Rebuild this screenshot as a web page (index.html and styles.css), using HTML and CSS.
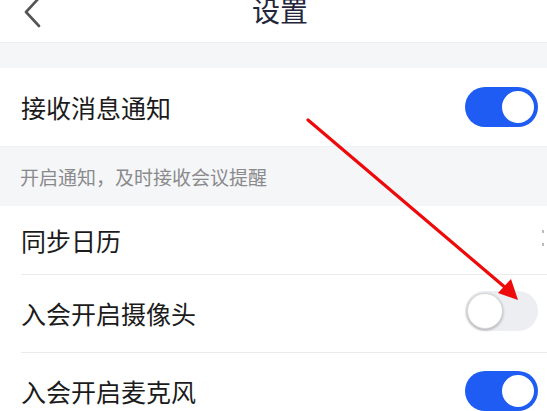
FILE: index.html
```html
<!DOCTYPE html>
<html lang="zh">
<head>
<meta charset="utf-8">
<link rel="stylesheet" href="styles.css">
</head>
<body>
<div class="page">
  <header class="header">
    <svg class="back" width="20" height="30" viewBox="0 0 20 30"><polyline points="16,0 3,14 16,28" fill="none" stroke="#555" stroke-width="2.6" stroke-linecap="round" stroke-linejoin="round"/></svg>
    <div class="title">设置</div>
  </header>
  <div class="band"></div>
  <div class="row row-tall">
    <span class="label">接收消息通知</span>
    <span class="toggle on"><span class="knob"></span></span>
  </div>
  <div class="note">开启通知，及时接收会议提醒</div>
  <div class="row row-short">
    <span class="label">同步日历</span>
    <span class="edge-dots"><i></i><i></i></span>
  </div>
  <div class="row row-tall divided">
    <span class="label">入会开启摄像头</span>
    <span class="toggle off"><span class="knob"></span></span>
  </div>
  <div class="row row-tall divided">
    <span class="label">入会开启麦克风</span>
    <span class="toggle on"><span class="knob"></span></span>
  </div>
  <svg class="arrow" width="547" height="411" viewBox="0 0 547 411">
    <line x1="308" y1="120" x2="507" y2="289" stroke="#ee0a0a" stroke-width="3.2" stroke-linecap="round"/>
    <polygon points="518,300 498,293 511,279" fill="#ee0a0a"/>
  </svg>
</div>
</body>
</html>
```
FILE: styles.css
```css
* { box-sizing: border-box; }
html, body { margin: 0; padding: 0; }
body {
  background: #fff;
  font-family: "Noto Sans CJK SC", "Noto Sans", sans-serif;
  width: 547px;
  height: 411px;
  overflow: hidden;
}
.page { position: relative; width: 547px; height: 411px; overflow: hidden; }
.header {
  position: relative;
  height: 43px;
  display: flex;
  align-items: flex-start;
  justify-content: center;
  border-bottom: 1px solid #eceef1;
}
.back { position: absolute; left: 23px; top: -2px; }
.title {
  font-size: 28px;
  line-height: 28px;
  margin-top: -4px;
  padding-left: 13px;
  color: #23253a;
}
.band { height: 25px; background: #f5f6f8; }
.row {
  position: relative;
  display: flex;
  align-items: center;
  justify-content: space-between;
  padding: 0 9px 0 21px;
  background: #fff;
}
.row-tall { height: 78px; }
.row-short { height: 68px; }
.divided::before {
  content: "";
  position: absolute;
  left: 21px;
  right: 0;
  top: 0;
  border-top: 1px solid #ebebeb;
}
.label { font-size: 25px; color: #1b1b1b; line-height: 1; margin-top: 0; }
.note {
  height: 60px;
  display: flex;
  align-items: center;
  padding-left: 20px;
  background: #f5f6f8;
  font-size: 19px;
  color: #8a8a8c;
  border-top: 1px solid #eef0f2;
}
.toggle {
  position: relative;
  width: 73px;
  height: 40px;
  border-radius: 20px;
  display: flex;
  align-items: center;
  padding: 2px;
}
.toggle.on { background: #1e5cf3; justify-content: flex-end; }
.toggle.off { background: #eceef2; justify-content: flex-start; margin-top: -4px; }
.knob {
  width: 36px;
  height: 36px;
  border-radius: 50%;
  background: #fff;
}
.toggle.on .knob { border: 2px solid #1e5cf3; }
.toggle.off .knob { box-shadow: 0 1px 3px rgba(0,0,0,0.3); border: 1px solid #d6d6d6; }
.edge-dots {
  display: flex;
  flex-direction: column;
  gap: 10px;
  margin-right: -6px;
  margin-top: -4px;
}
.edge-dots i { display: block; width: 2px; height: 3px; background: #bbb; }
.arrow { position: absolute; left: 0; top: 0; pointer-events: none; }
```
